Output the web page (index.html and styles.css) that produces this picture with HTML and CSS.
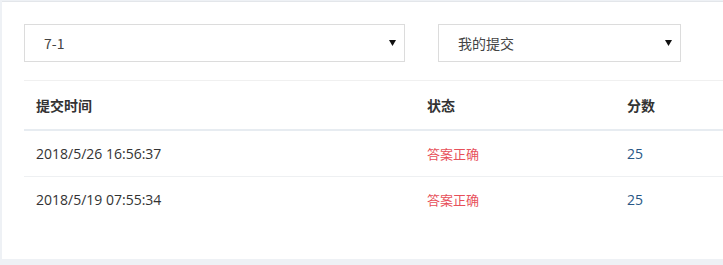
FILE: index.html
```html
<!DOCTYPE html>
<html>
<head>
<meta charset="utf-8">
<link rel="stylesheet" href="styles.css">
</head>
<body>
<div class="panel">
  <div class="filters">
    <div class="select select-wide"><span class="select-text">7-1</span><svg class="caret" width="7" height="6" viewBox="0 0 7 6"><path d="M0 0H7L3.5 6Z" fill="#111"/></svg></div>
    <div class="select select-narrow"><span class="select-text">我的提交</span><svg class="caret" width="7" height="6" viewBox="0 0 7 6"><path d="M0 0H7L3.5 6Z" fill="#111"/></svg></div>
  </div>
  <table class="grid">
    <thead>
      <tr><th class="c1">提交时间</th><th class="c2">状态</th><th class="c3">分数</th></tr>
    </thead>
    <tbody>
      <tr><td>2018/5/26 16:56:37</td><td class="ok">答案正确</td><td class="score">25</td></tr>
      <tr><td>2018/5/19 07:55:34</td><td class="ok">答案正确</td><td class="score">25</td></tr>
    </tbody>
  </table>
</div>
</body>
</html>
```

FILE: styles.css
```css
html, body {
  margin: 0;
  padding: 0;
  overflow: hidden;
  background: #eef1f5;
}
body {
  width: 723px;
  height: 265px;
  font-family: "Open Sans", "Noto Sans CJK SC", sans-serif;
  color: #333;
}
.panel {
  margin: 1px 0 0 2px;
  height: 258px;
  width: 800px;
  background: #fff;
  border-top: 1px solid #e3e6ea;
  box-sizing: border-box;
  padding: 22px 0 0 22px;
}
.filters {
  display: flex;
  gap: 33px;
}
.select {
  height: 38px;
  box-sizing: border-box;
  border: 1px solid #dcdcdc;
  display: flex;
  align-items: center;
  justify-content: space-between;
  padding: 0 8px 0 19px;
  background: #fff;
}
.select-wide { width: 381px; }
.select-narrow { width: 243px; }
.select-text {
  font-family: "Noto Sans CJK SC", sans-serif;
  font-size: 14px;
  color: #444;
}
.caret { display: block; }
.grid {
  margin-top: 18px;
  width: 778px;
  border-collapse: collapse;
  border-top: 1px solid #f0f0f0;
}
.grid th {
  text-align: left;
  font-family: "Noto Sans CJK SC", sans-serif;
  font-weight: bold;
  font-size: 14px;
  color: #333;
  height: 47px;
  padding: 0 12px 1px;
  border-bottom: 2px solid #e7ecf1;
}
.grid th.c1 { width: 367px; }
.grid th.c2 { width: 176px; }
.grid td {
  font-size: 14px;
  color: #333;
  height: 45px;
  padding: 0 12px;
  border-bottom: 1px solid #eef0f2;
}
.grid tbody tr:last-child td { border-bottom: none; }
.grid td.ok {
  color: #e7505a;
  font-family: "Noto Sans CJK SC", sans-serif;
  font-size: 13px;
}
.grid td.score {
  color: #285785;
  font-size: 14px;
}
```
